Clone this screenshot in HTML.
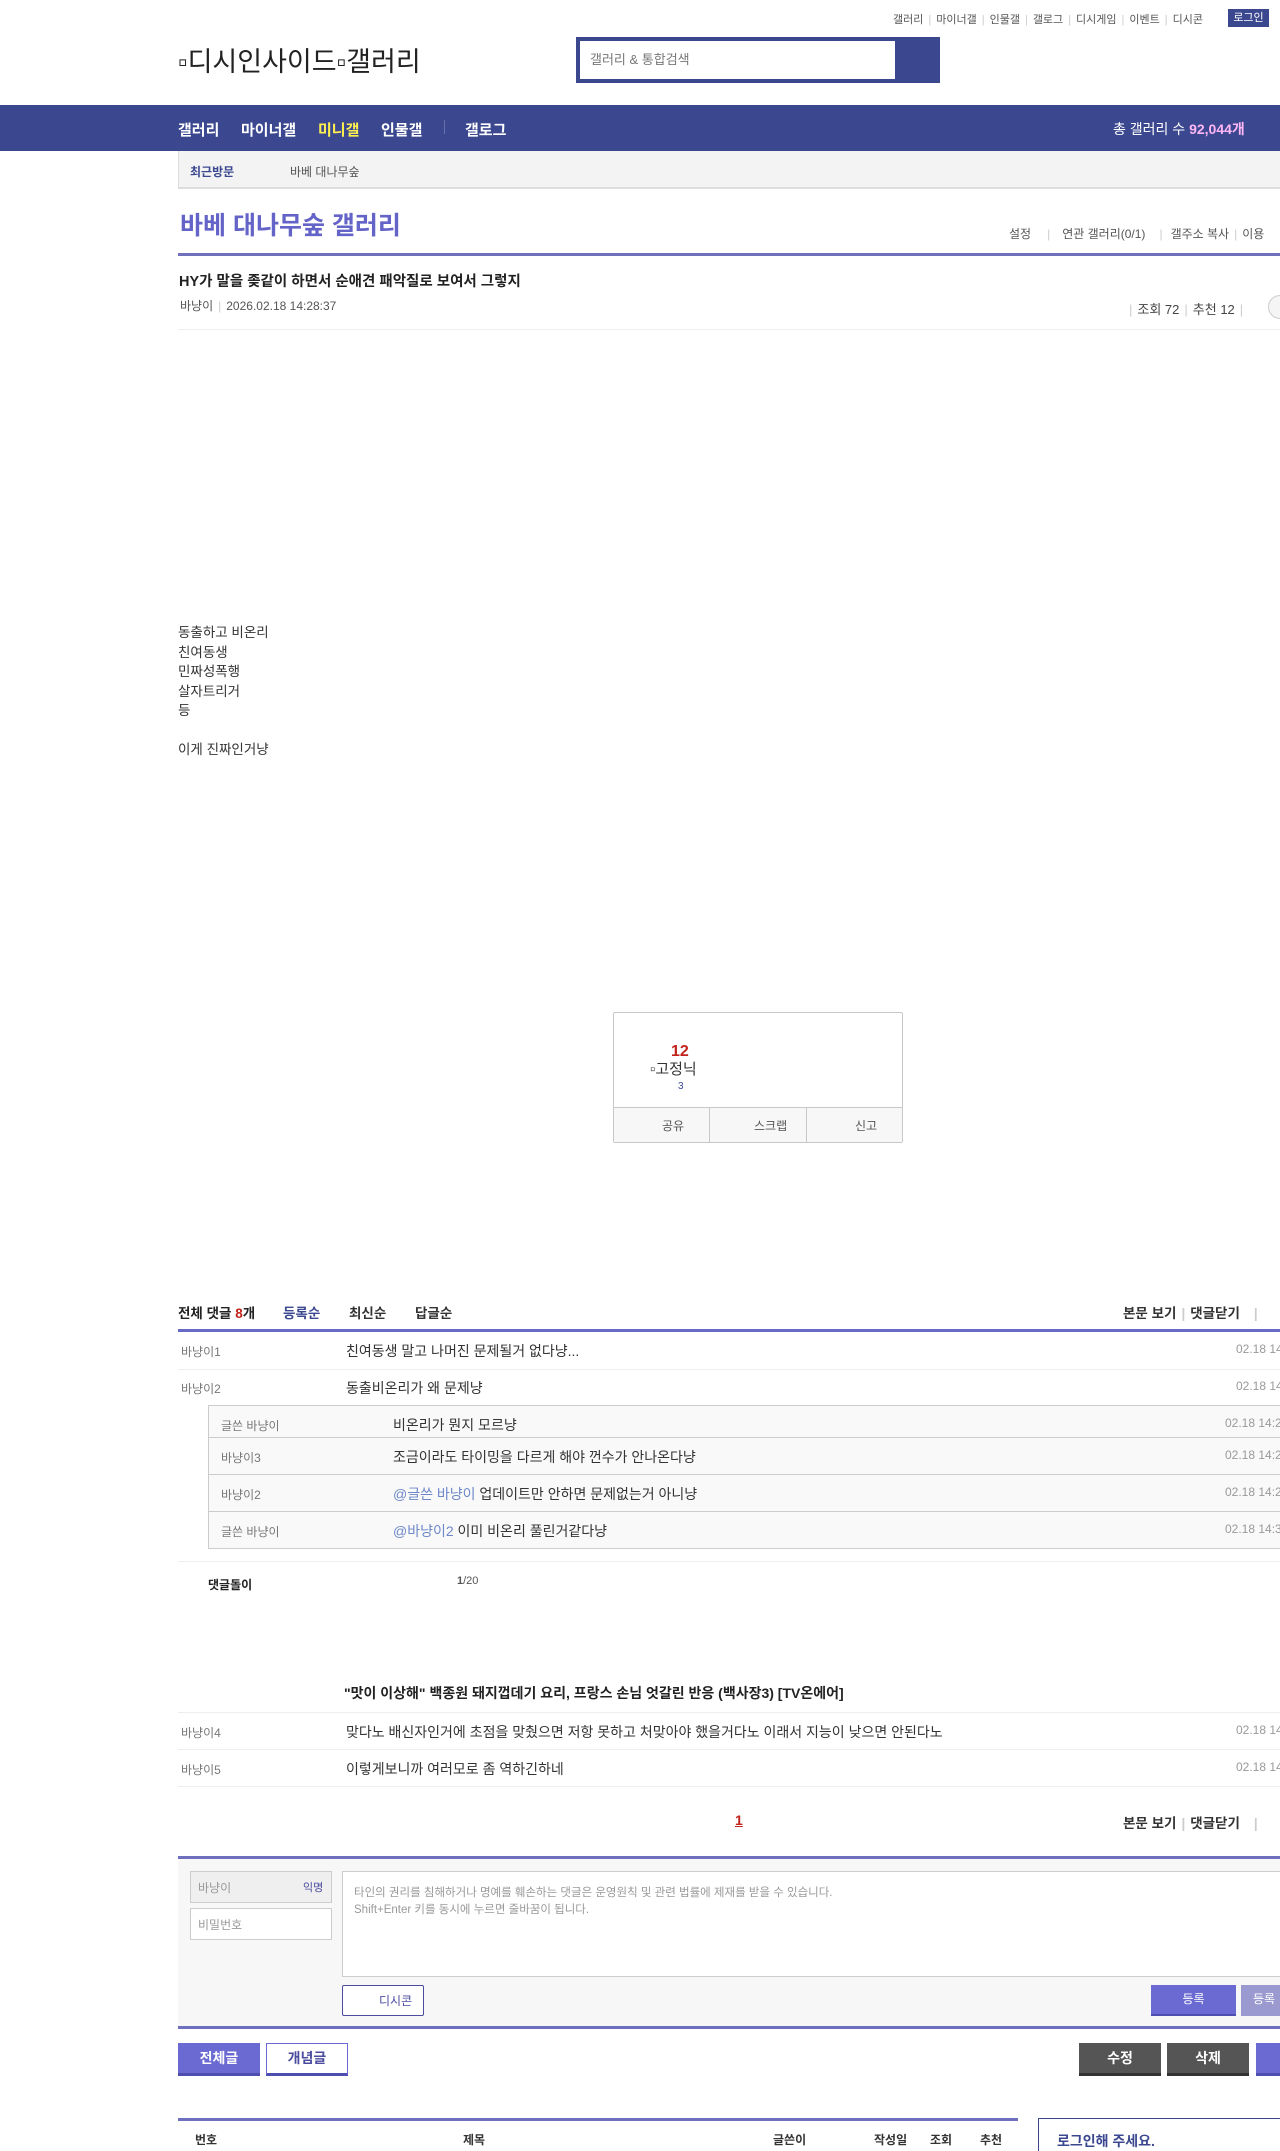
<!DOCTYPE html>
<html><head><meta charset="utf-8">
<style>
*{margin:0;padding:0;box-sizing:border-box}
html,body{width:1280px;height:2151px;overflow:hidden;background:#fff}
body{font-family:"Liberation Sans","Noto Sans CJK KR",sans-serif;font-size:13px;color:#333;position:relative}
.a{position:absolute;white-space:nowrap}
.g{color:#777}
.sep{color:#ccc;margin:0 5px}
.c{font-size:14px}
</style></head><body>

<div class="a" style="left:893px;top:11px;font-size:11px;color:#555">갤러리<span class="sep">|</span>마이너갤<span class="sep">|</span>인물갤<span class="sep">|</span>갤로그<span class="sep">|</span>디시게임<span class="sep">|</span>이벤트<span class="sep">|</span>디시콘</div>
<div class="a" style="left:1228px;top:9px;width:41px;height:18px;background:#3b4890;color:#fff;font-size:11px;text-align:center;line-height:18px">로그인</div>

<div class="a" style="left:178px;top:40px;font-size:27px;color:#222">▫디시인사이드▫갤러리</div>

<div class="a" style="left:576px;top:37px;width:364px;height:46px;background:#3b4890"></div>
<div class="a" style="left:580px;top:41px;width:315px;height:38px;background:#fff;font-size:13px;color:#777;line-height:38px;padding-left:10px">갤러리 &amp; 통합검색</div>

<div class="a" style="left:0;top:105px;width:1280px;height:46px;background:#3b4890"></div>
<div class="a" style="left:178px;top:119px;font-size:15px;font-weight:bold;color:#fff">갤러리</div>
<div class="a" style="left:241px;top:119px;font-size:15px;font-weight:bold;color:#fff">마이너갤</div>
<div class="a" style="left:318px;top:119px;font-size:15px;font-weight:bold;color:#fff04f">미니갤</div>
<div class="a" style="left:381px;top:119px;font-size:15px;font-weight:bold;color:#fff">인물갤</div>
<div class="a" style="left:444px;top:120px;width:1px;height:14px;background:#6670a8"></div>
<div class="a" style="left:465px;top:119px;font-size:15px;font-weight:bold;color:#fff">갤로그</div>
<div class="a" style="left:1113px;top:119px;font-size:14px;color:#fff">총 갤러리 수 <b style="color:#ffb7f6">92,044개</b></div>

<div class="a" style="left:178px;top:151px;width:1110px;height:38px;background:#f3f3f3;border-left:1px solid #ddd;border-bottom:2px solid #ddd"></div>
<div class="a" style="left:190px;top:163px;font-size:12px;font-weight:bold;color:#3b4890">최근방문</div>
<div class="a" style="left:290px;top:163px;font-size:12px;color:#555">바베 대나무숲</div>

<div class="a" style="left:180px;top:206px;font-size:25px;font-weight:bold;color:#6464c8">바베 대나무숲 갤러리</div>
<div class="a" style="left:1009px;top:225px;font-size:12px;color:#555">설정<span class="sep" style="margin:0 12px 0 16px">|</span>연관 갤러리(0/1)<span class="sep" style="margin:0 8px 0 14px">|</span>갤주소 복사<span class="sep">|</span>이용</div>
<div class="a" style="left:178px;top:253px;width:1110px;height:3px;background:#7171bb"></div>

<div class="a" style="left:179px;top:270px;font-size:14.5px;font-weight:bold;color:#222">HY가 말을 좆같이 하면서 순애견 패악질로 보여서 그렇지</div>
<div class="a" style="left:180px;top:297px;font-size:12px;color:#555">바냥이<span class="sep">|</span>2026.02.18 14:28:37</div>
<div class="a" style="left:1124px;top:299px;font-size:13px;color:#444"><span class="sep">|</span>조회 72<span class="sep">|</span>추천 12<span class="sep">|</span></div>
<div class="a" style="left:1268px;top:295px;width:24px;height:24px;border:1px solid #ccc;border-radius:50%;background:#f5f5f5"></div>
<div class="a" style="left:178px;top:329px;width:1110px;height:1px;background:#eee"></div>

<div class="a" style="left:178px;top:623px;font-size:13.5px;color:#333;line-height:19.5px">동출하고 비온리<br>친여동생<br>민짜성폭행<br>살자트리거<br>등<br><br>이게 진짜인거냥</div>

<div class="a" style="left:613px;top:1012px;width:290px;height:131px;border:1px solid #c8c8c8;border-radius:2px"></div>
<div class="a" style="left:614px;top:1107px;width:288px;height:35px;background:#f7f7f7;border-top:1px solid #c8c8c8"></div>
<div class="a" style="left:709px;top:1107px;width:1px;height:36px;background:#c8c8c8"></div>
<div class="a" style="left:806px;top:1107px;width:1px;height:36px;background:#c8c8c8"></div>
<div class="a" style="left:662px;top:1117px;font-size:12px;color:#555">공유</div>
<div class="a" style="left:754px;top:1117px;font-size:12px;color:#555">스크랩</div>
<div class="a" style="left:855px;top:1117px;font-size:12px;color:#555">신고</div>
<div class="a" style="left:671px;top:1043px;font-size:16px;font-weight:bold;color:#c1221a">12</div>
<div class="a" style="left:650px;top:1058px;font-size:15px;color:#333">▫고정닉</div>
<div class="a" style="left:678px;top:1081px;font-size:10px;color:#3b4890">3</div>

<div class="a" style="left:178px;top:1302px;font-size:13.5px;font-weight:bold;color:#222">전체 댓글 <span style="color:#c1221a">8</span>개</div>
<div class="a" style="left:283px;top:1302px;font-size:13.5px;font-weight:bold;color:#3b4890">등록순</div>
<div class="a" style="left:349px;top:1302px;font-size:13.5px;font-weight:bold;color:#333">최신순</div>
<div class="a" style="left:415px;top:1302px;font-size:13.5px;font-weight:bold;color:#333">답글순</div>
<div class="a" style="left:1123px;top:1302px;font-size:13.5px;font-weight:bold;color:#333">본문 보기<span class="sep">|</span>댓글닫기<span class="sep" style="margin-left:14px">|</span></div>
<div class="a" style="left:178px;top:1329px;width:1110px;height:3px;background:#6969c8"></div>

<div class="a g" style="left:181px;top:1343px;font-size:12px">바냥이1</div>
<div class="a c" style="left:346px;top:1341px">친여동생 말고 나머진 문제될거 없다냥...</div>
<div class="a" style="left:1236px;top:1342px;font-size:12px;color:#999">02.18 14:</div>
<div class="a" style="left:178px;top:1369px;width:1110px;height:1px;background:#eee"></div>
<div class="a g" style="left:181px;top:1380px;font-size:12px">바냥이2</div>
<div class="a c" style="left:346px;top:1378px">동출비온리가 왜 문제냥</div>
<div class="a" style="left:1236px;top:1379px;font-size:12px;color:#999">02.18 14:</div>

<div class="a" style="left:208px;top:1405px;width:1080px;height:144px;background:#f9f9f9;border:1px solid #ccc;border-right:none"></div>
<div class="a" style="left:209px;top:1437px;width:1079px;height:1px;background:#ccc"></div>
<div class="a" style="left:209px;top:1474px;width:1079px;height:1px;background:#ccc"></div>
<div class="a" style="left:209px;top:1511px;width:1079px;height:1px;background:#ccc"></div>
<div class="a g" style="left:221px;top:1417px;font-size:12px">글쓴 바냥이</div>
<div class="a c" style="left:393px;top:1415px">비온리가 뭔지 모르냥</div>
<div class="a" style="left:1225px;top:1416px;font-size:12px;color:#999">02.18 14:2</div>
<div class="a g" style="left:221px;top:1449px;font-size:12px">바냥이3</div>
<div class="a c" style="left:393px;top:1447px">조금이라도 타이밍을 다르게 해야 껀수가 안나온다냥</div>
<div class="a" style="left:1225px;top:1448px;font-size:12px;color:#999">02.18 14:2</div>
<div class="a g" style="left:221px;top:1486px;font-size:12px">바냥이2</div>
<div class="a c" style="left:393px;top:1484px"><span style="color:#6d87c9">@글쓴 바냥이</span> 업데이트만 안하면 문제없는거 아니냥</div>
<div class="a" style="left:1225px;top:1485px;font-size:12px;color:#999">02.18 14:2</div>
<div class="a g" style="left:221px;top:1523px;font-size:12px">글쓴 바냥이</div>
<div class="a c" style="left:393px;top:1521px"><span style="color:#6d87c9">@바냥이2</span> 이미 비온리 풀린거같다냥</div>
<div class="a" style="left:1225px;top:1522px;font-size:12px;color:#999">02.18 14:3</div>

<div class="a" style="left:178px;top:1561px;width:1110px;height:1px;background:#eee"></div>
<div class="a" style="left:208px;top:1576px;font-size:12px;font-weight:bold;color:#222">댓글돌이</div>
<div class="a" style="left:457px;top:1575px;font-size:11px;color:#555"><b>1</b>/20</div>

<div class="a" style="left:344px;top:1683px;font-size:14px;font-weight:bold;color:#222">"맛이 이상해" 백종원 돼지껍데기 요리, 프랑스 손님 엇갈린 반응 (백사장3) [TV온에어]</div>
<div class="a" style="left:178px;top:1712px;width:1110px;height:1px;background:#eee"></div>
<div class="a g" style="left:181px;top:1724px;font-size:12px">바냥이4</div>
<div class="a c" style="left:346px;top:1722px">맞다노 배신자인거에 초점을 맞췄으면 저항 못하고 처맞아야 했을거다노 이래서 지능이 낮으면 안된다노</div>
<div class="a" style="left:1236px;top:1723px;font-size:12px;color:#999">02.18 14:</div>
<div class="a" style="left:178px;top:1749px;width:1110px;height:1px;background:#eee"></div>
<div class="a g" style="left:181px;top:1761px;font-size:12px">바냥이5</div>
<div class="a c" style="left:346px;top:1759px">이렇게보니까 여러모로 좀 역하긴하네</div>
<div class="a" style="left:1236px;top:1760px;font-size:12px;color:#999">02.18 14:</div>
<div class="a" style="left:178px;top:1786px;width:1110px;height:1px;background:#eee"></div>

<div class="a" style="left:735px;top:1812px;font-size:14px;font-weight:bold;color:#c1221a;text-decoration:underline">1</div>
<div class="a" style="left:1123px;top:1812px;font-size:13.5px;font-weight:bold;color:#333">본문 보기<span class="sep">|</span>댓글닫기<span class="sep" style="margin-left:14px">|</span></div>

<div class="a" style="left:178px;top:1856px;width:1110px;height:173px;background:#f7f7f7;border-top:3px solid #6f6fc0;border-bottom:3px solid #6f6fc0"></div>
<div class="a" style="left:190px;top:1871px;width:142px;height:32px;background:#efefef;border:1px solid #ccc"></div>
<div class="a" style="left:198px;top:1879px;font-size:12px;color:#999">바냥이</div>
<div class="a" style="left:303px;top:1879px;font-size:11px;color:#4b4ba0">익명</div>
<div class="a" style="left:190px;top:1908px;width:142px;height:32px;background:#fff;border:1px solid #ccc"></div>
<div class="a" style="left:198px;top:1916px;font-size:12px;color:#999">비밀번호</div>
<div class="a" style="left:342px;top:1871px;width:960px;height:106px;background:#fff;border:1px solid #ccc"></div>
<div class="a" style="left:354px;top:1885px;font-size:11.5px;color:#999;line-height:17px">타인의 권리를 침해하거나 명예를 훼손하는 댓글은 운영원칙 및 관련 법률에 제재를 받을 수 있습니다.<br>Shift+Enter 키를 동시에 누르면 줄바꿈이 됩니다.</div>
<div class="a" style="left:342px;top:1985px;width:82px;height:31px;background:#fff;border:1px solid #4b4ba0;border-radius:2px"></div>
<div class="a" style="left:379px;top:1992px;font-size:12px;color:#4b4ba0">디시콘</div>
<div class="a" style="left:1151px;top:1985px;width:85px;height:31px;background:#6a6ad2;border-bottom:2px solid #4e4eb0;color:#fff;font-size:12px;text-align:center;line-height:29px">등록</div>
<div class="a" style="left:1241px;top:1985px;width:60px;height:31px;background:#9a9ad0;color:#fff;font-size:12px;line-height:29px;padding-left:12px">등록</div>

<div class="a" style="left:178px;top:2043px;width:82px;height:33px;background:#6a6ad2;border-bottom:3px solid #4e4eb0;color:#fff;font-size:14px;font-weight:bold;text-align:center;line-height:31px">전체글</div>
<div class="a" style="left:266px;top:2043px;width:82px;height:33px;background:#fff;border:1px solid #6a6ad2;border-bottom:3px solid #4e4eb0;color:#4b4ba0;font-size:14px;font-weight:bold;text-align:center;line-height:29px">개념글</div>
<div class="a" style="left:1079px;top:2043px;width:82px;height:33px;background:#555;border-bottom:3px solid #333;color:#fff;font-size:14px;font-weight:bold;text-align:center;line-height:31px">수정</div>
<div class="a" style="left:1167px;top:2043px;width:82px;height:33px;background:#555;border-bottom:3px solid #333;color:#fff;font-size:14px;font-weight:bold;text-align:center;line-height:31px">삭제</div>
<div class="a" style="left:1256px;top:2043px;width:40px;height:33px;background:#6a6ad2;border-bottom:3px solid #4e4eb0"></div>

<div class="a" style="left:178px;top:2118px;width:840px;height:3px;background:#6f6fc0"></div>
<div class="a" style="left:195px;top:2131px;font-size:12px;font-weight:bold;color:#333">번호</div>
<div class="a" style="left:463px;top:2131px;font-size:12px;font-weight:bold;color:#333">제목</div>
<div class="a" style="left:773px;top:2131px;font-size:12px;font-weight:bold;color:#333">글쓴이</div>
<div class="a" style="left:874px;top:2131px;font-size:12px;font-weight:bold;color:#333">작성일</div>
<div class="a" style="left:930px;top:2131px;font-size:12px;font-weight:bold;color:#333">조회</div>
<div class="a" style="left:980px;top:2131px;font-size:12px;font-weight:bold;color:#333">추천</div>
<div class="a" style="left:1038px;top:2118px;width:260px;height:60px;border:1px solid #3b4890"></div>
<div class="a" style="left:1057px;top:2131px;font-size:14px;font-weight:bold;color:#3b4890">로그인해 주세요.</div>

</body></html>
